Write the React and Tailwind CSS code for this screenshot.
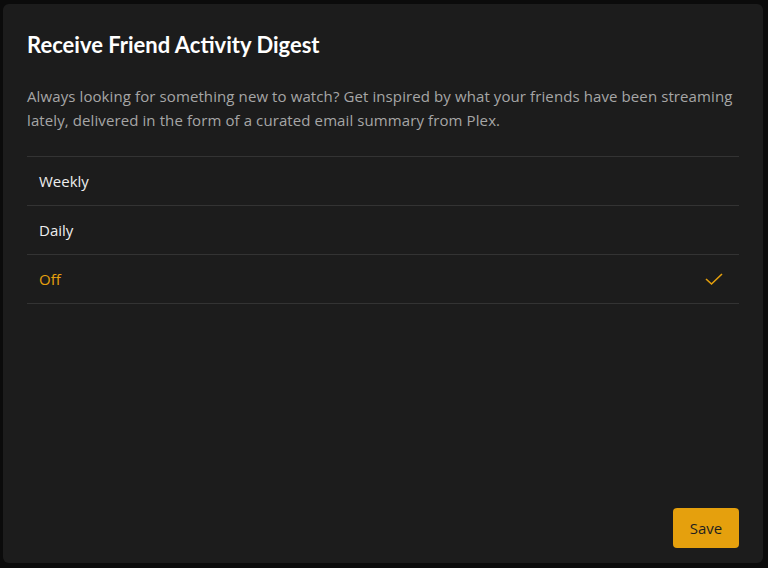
export default function App() {
  const rows = [
    { label: "Weekly", active: false },
    { label: "Daily", active: false },
    { label: "Off", active: true },
  ];
  return (
    <div className="w-[768px] h-[568px] bg-[#0b0b0b] pt-[4px] pl-[3px]" style={{ fontFamily: '"Open Sans", sans-serif' }}>
      <div className="w-[760px] h-[559px] bg-[#1c1c1c] rounded-[6px] px-6 pt-[27px] pb-[15px] flex flex-col">
        <h1 className="text-[22px] leading-[28px] font-bold text-white" style={{ fontFamily: 'Lato, sans-serif' }}>
          Receive Friend Activity Digest
        </h1>
        <p className="mt-[25px] text-[15px] leading-[24px] tracking-[0.1px] text-[#a6a6a6]">
          Always looking for something new to watch? Get inspired by what your friends have been streaming lately, delivered in the form of a curated email summary from Plex.
        </p>
        <div className="mt-[24px] border-t border-[#333333]">
          {rows.map((r) => (
            <div key={r.label} className="h-[49px] border-b border-[#333333] flex items-center justify-between pl-3 pr-4">
              <span className={`text-[15px] ${r.active ? "text-[#e5a00d]" : "text-[#eeeeee]"}`}>{r.label}</span>
              {r.active && (
                <svg width="18" height="14" viewBox="0 0 18 14" fill="none">
                  <path d="M1 7 L6.5 12 L17 2" stroke="#e5a00d" strokeWidth="1.6" />
                </svg>
              )}
            </div>
          ))}
        </div>
        <div className="mt-auto flex justify-end">
          <button className="h-[40px] w-[66px] rounded-[4px] bg-[#e5a00d] text-[#1f1f1f] text-[15px]">Save</button>
        </div>
      </div>
    </div>
  );
}
